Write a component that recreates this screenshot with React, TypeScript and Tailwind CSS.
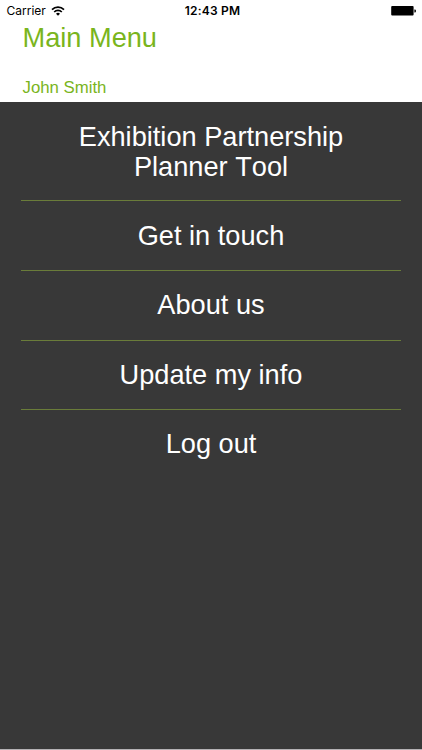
const menuItems = ["Get in touch", "About us", "Update my info", "Log out"];

const StatusBar = () => {
  return (
    <div className="grid grid-cols-3 items-center h-[22px] px-1.5 text-[12px] text-black font-['Inter',sans-serif]">
      <div className="flex items-center gap-[5px] pl-[0.5px]">
        <span>Carrier</span>
        <svg width="14" height="10" viewBox="0 0 14 10" fill="none" stroke="black" strokeWidth="1.7">
          <path d="M1 3.6a8.5 8.5 0 0 1 12 0" />
          <path d="M3.2 6a5.4 5.4 0 0 1 7.6 0" />
          <path d="M7 9.8 5 7.7a2.8 2.8 0 0 1 4 0Z" fill="black" stroke="none" />
        </svg>
      </div>
      <span className="pl-[3px] text-center font-semibold tracking-[0.2px]">12:43 PM</span>
      <svg className="justify-self-end" width="25" height="10" viewBox="0 0 25 10">
        <rect x="0.2" y="0" width="22.4" height="9.6" rx="1" fill="black" />
        <path d="M23.4 3.4h.5a1 1 0 0 1 1 1v1a1 1 0 0 1-1 1h-.5Z" fill="black" />
      </svg>
    </div>
  );
};

const App = () => {
  return (
    <div className="flex flex-col h-[750px] w-[422px] overflow-hidden bg-white font-['Liberation_Sans',Arial,sans-serif]">
      <StatusBar />
      <header className="h-20 px-[22.5px] text-[#7ab51d]">
        <h1 className="text-[27.2px] leading-8">Main Menu</h1>
        <p className="mt-6 text-[16.8px] leading-5">John Smith</p>
      </header>
      <nav className="flex-1 bg-[#383838] px-[21px] text-center text-[27.2px] leading-[30px] text-white [font-kerning:none]">
        <button className="block w-full h-[98.4px] pt-px">
          Exhibition Partnership
          <br />
          Planner Tool
        </button>
        {menuItems.map(item => (
          <button key={item} className="block w-full h-[69.6px] border-t border-[#6a7c3a]">
            {item}
          </button>
        ))}
      </nav>
      <div className="h-px bg-[#b5b2b5]" />
    </div>
  );
};

export default App;
